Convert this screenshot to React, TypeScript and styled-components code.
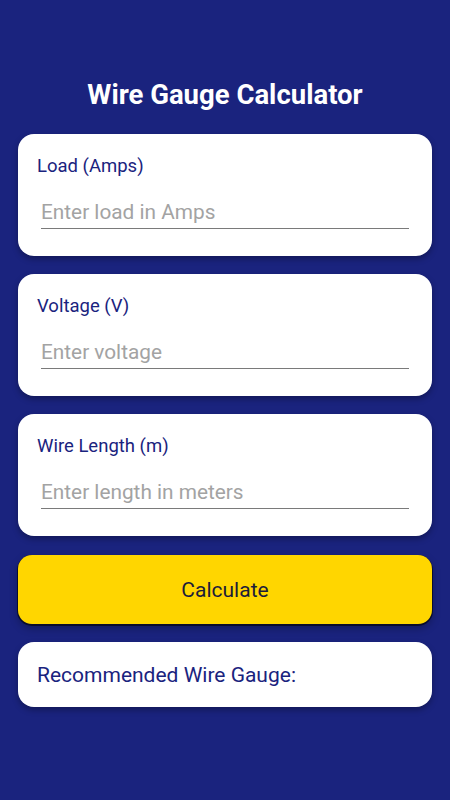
import React from 'react'
import styled, { createGlobalStyle } from 'styled-components'

const GlobalStyle = createGlobalStyle`
  html, body {
    margin: 0;
    padding: 0;
    background: #1a237e;
    font-family: Roboto, "Noto Sans", Arial, sans-serif;
  }
  * {
    box-sizing: border-box;
  }
`

const Screen = styled.div`
  min-height: 800px;
  background: #1a237e;
  padding: 78px 18px 0;
  display: flex;
  flex-direction: column;
`

const Title = styled.h1`
  margin: 0 0 22px;
  color: #ffffff;
  font-size: 27.5px;
  line-height: 34px;
  font-weight: 700;
  text-align: center;
`

const Stack = styled.div`
  display: flex;
  flex-direction: column;
  gap: 18px;
`

const Card = styled.div`
  background: #ffffff;
  border-radius: 16px;
  padding: 21px 19px 27px;
  box-shadow: 0 3px 6px rgba(0, 0, 0, 0.3);
`

const Label = styled.label`
  display: block;
  margin: 0 0 13px;
  color: #1a237e;
  font-size: 18.5px;
  line-height: 22px;
`

const Input = styled.input`
  all: unset;
  display: block;
  box-sizing: border-box;
  width: calc(100% - 8px);
  margin: 0 4px;
  padding: 10px 0 4px;
  line-height: 24px;
  font-size: 20.8px;
  font-family: Roboto, "Noto Sans", Arial, sans-serif;
  color: #212121;
  border-bottom: 1px solid #7a7a7a;
  &::placeholder {
    color: #a3a3a3;
  }
`

const CalcButton = styled.button`
  all: unset;
  box-sizing: border-box;
  height: 69px;
  margin-top: 1px;
  border-radius: 14px;
  background: #ffd600;
  color: #1c1c3a;
  font-size: 21px;
  text-align: center;
  cursor: pointer;
  box-shadow: 0 1px 0 1px rgba(0, 0, 0, 0.55), 0 4px 8px rgba(0, 0, 0, 0.3);
`

const ResultCard = styled.div`
  background: #ffffff;
  border-radius: 16px;
  height: 65px;
  padding: 0 19px;
  display: flex;
  align-items: center;
  color: #1a237e;
  font-size: 21px;
  box-shadow: 0 3px 6px rgba(0, 0, 0, 0.3);
`

const fields = [
  { label: 'Load (Amps)', placeholder: 'Enter load in Amps' },
  { label: 'Voltage (V)', placeholder: 'Enter voltage' },
  { label: 'Wire Length (m)', placeholder: 'Enter length in meters' },
]

export default function App() {
  const [values, setValues] = React.useState<string[]>(['', '', ''])

  return (
    <>
      <GlobalStyle />
      <Screen>
        <Title>Wire Gauge Calculator</Title>
        <Stack>
          {fields.map((f, i) => (
            <Card key={f.label}>
              <Label>{f.label}</Label>
              <Input
                placeholder={f.placeholder}
                value={values[i]}
                onChange={e => {
                  const next = [...values]
                  next[i] = e.target.value
                  setValues(next)
                }}
              />
            </Card>
          ))}
          <CalcButton>Calculate</CalcButton>
          <ResultCard>Recommended Wire Gauge:</ResultCard>
        </Stack>
      </Screen>
    </>
  )
}
